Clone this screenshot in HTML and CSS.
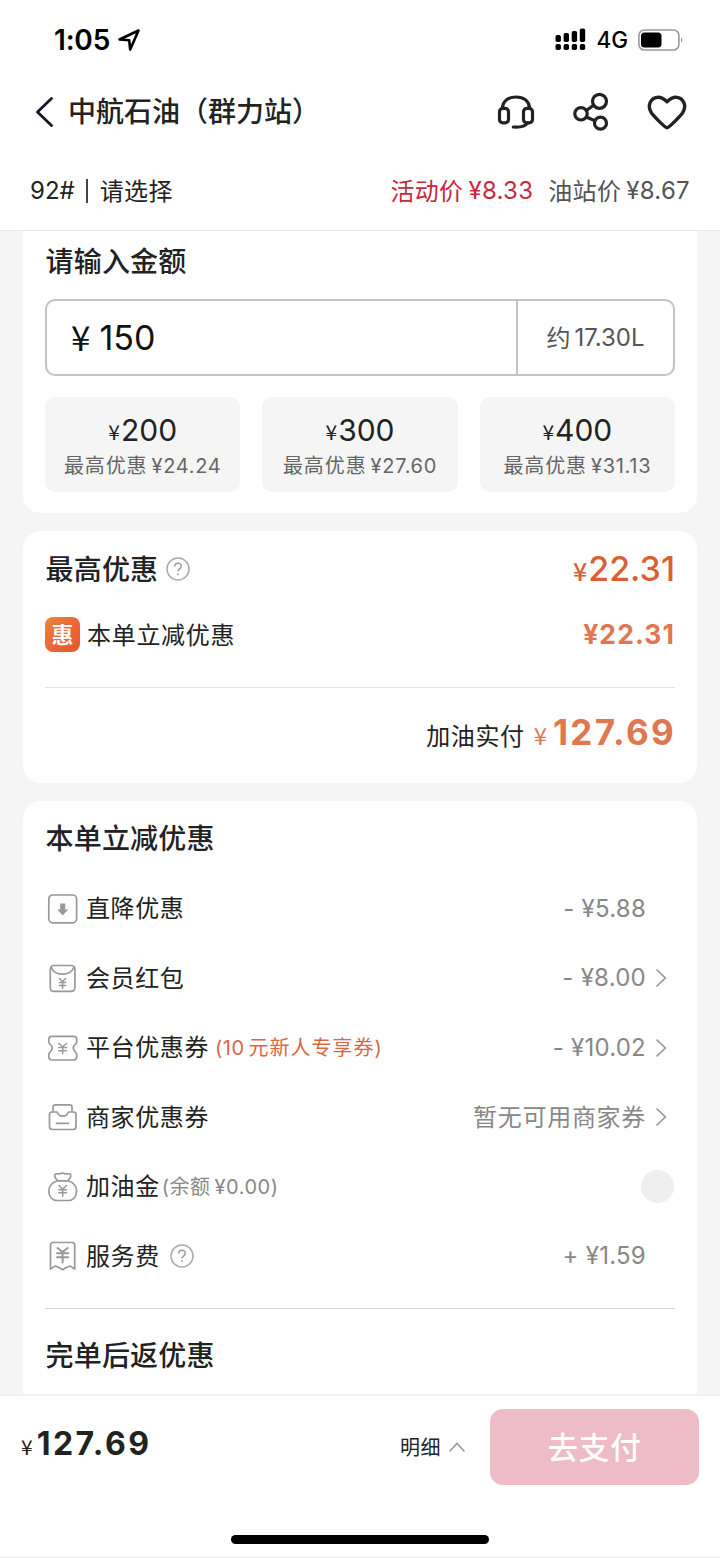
FILE: index.html
```html
<!DOCTYPE html>
<html lang="zh-CN">
<head>
<meta charset="utf-8">
<title>中航石油（群力站）</title>
<link rel="stylesheet" href="styles.css">
</head>
<body>
<div class="app">
  <header class="header">
    <div class="status">
      <div class="status-left">
        <span class="clock">1:05</span>
        <svg class="locate" width="24" height="24" viewBox="0 0 24 24" fill="none" stroke="#000" stroke-width="2.6" stroke-linejoin="round"><path d="M21.5 2.500 2.500 11.500 12.200 12.300 13.200 21.600Z"/></svg>
      </div>
      <div class="status-right">
        <svg width="31" height="23" viewBox="0 0 31 23" fill="#000"><rect x="0.500" y="7" width="5.400" height="7" rx="1.800"/><rect x="8.600" y="5" width="5.400" height="9" rx="1.800"/><rect x="16.700" y="3" width="5.400" height="11" rx="1.800"/><rect x="24.800" y="0.600" width="5.400" height="13.400" rx="1.800"/><rect x="0.500" y="16" width="5.400" height="6" rx="1.800"/><rect x="8.600" y="16" width="5.400" height="6" rx="1.800"/><rect x="16.700" y="16" width="5.400" height="6" rx="1.800"/><rect x="24.800" y="16" width="5.400" height="6" rx="1.800"/></svg>
        <span class="network">4G</span>
        <svg class="battery" width="46" height="22" viewBox="0 0 46 22"><rect x="0.900" y="1" width="40" height="20" rx="5.500" fill="#fff" stroke="#999" stroke-width="1.600"/><rect x="3" y="3.400" width="20.500" height="15.200" rx="3.500"/><path d="M43 8q2.600 3 0 6z" fill="#999"/></svg>
      </div>
    </div>
    <div class="nav">
      <svg class="back" width="20" height="32" viewBox="0 0 20 32" fill="none" stroke="#17172b" stroke-width="2.800" stroke-linecap="round" stroke-linejoin="round"><path d="M16.500 2.500 2.500 16 16.500 29.500"/></svg>
      <h1 class="nav-title">中航石油（群力站）</h1>
      <div class="actions">
        <svg width="40" height="40" viewBox="0 0 40 40" fill="none" stroke="#222" stroke-width="3.200" stroke-linecap="round"><path d="M6.300 16.500C7 8.800 12.500 5 20 5S33 8.800 33.700 16.500"/><rect x="3.500" y="16.300" width="9" height="14.500" rx="3.400"/><rect x="27.500" y="16.300" width="9" height="14.500" rx="3.400"/><path d="M31.500 31C29.500 34.200 25 35.500 17.300 35"/></svg>
        <svg width="40" height="40" viewBox="0 0 40 40" fill="none" stroke="#222" stroke-width="3.200"><circle cx="28.500" cy="9.300" r="7"/><circle cx="10" cy="21.800" r="6.200"/><circle cx="29.500" cy="31.200" r="6"/><path d="M15.300 18.500 22.600 13.300M15.300 25 24 28.700"/></svg>
        <svg width="42" height="40" viewBox="0 0 42 40" fill="none" stroke="#222" stroke-width="3.400" stroke-linejoin="round"><path d="M21 35.800C23 35.800 34 24.300 36.500 21 41.500 13.500 37 5.300 29.500 5.300 26 5.300 24.500 6.500 21 9.800 17.500 6.500 16 5.300 12.500 5.300 5 5.300.5 13.500 5.500 21 8 24.300 19 35.800 21 35.800Z"/></svg>
      </div>
    </div>
    <div class="station">
      <div class="fuel"><span>92#</span><i class="fuel-bar"></i><span class="choose">请选择</span></div>
      <div class="prices">
        <span class="price price-sale"><span class="lift">活动价</span><b>¥8.33</b></span>
        <span class="price"><span class="lift">油站价</span><b>¥8.67</b></span>
      </div>
    </div>
  </header>

  <main class="content">
    <section class="card card-amount">
      <h2 class="card-title">请输入金额</h2>
      <div class="amount-box">
        <div class="amount"><span class="yen">¥</span><span>150</span></div>
        <div class="litres"><span class="cjk">约</span>17.30L</div>
      </div>
      <div class="presets">
        <div class="preset"><div class="preset-value"><span class="yen">¥</span>200</div><div class="preset-note"><span>最高优惠</span><b>¥24.24</b></div></div>
        <div class="preset"><div class="preset-value"><span class="yen">¥</span>300</div><div class="preset-note"><span>最高优惠</span><b>¥27.60</b></div></div>
        <div class="preset"><div class="preset-value"><span class="yen">¥</span>400</div><div class="preset-note"><span>最高优惠</span><b>¥31.13</b></div></div>
      </div>
    </section>

    <section class="card card-best">
      <div class="best-head">
        <h2 class="card-title">最高优惠</h2>
        <svg class="help" width="24" height="24" viewBox="0 0 24 24" fill="none" stroke="#aaa" stroke-width="1.500"><circle cx="12" cy="12" r="11"/><path d="M8.700 9.500c0-4.300 6.600-4.300 6.600-.2 0 2.700-3.300 2.600-3.300 5.300M12 16.300v1.700" stroke="#999"/></svg>
        <div class="best-value"><span class="yen">¥</span>22.31</div>
      </div>
      <div class="instant">
        <span class="badge">惠</span>
        <span class="instant-label">本单立减优惠</span>
        <span class="instant-value">¥22.31</span>
      </div>
      <div class="total">
        <span class="total-label">加油实付</span><span class="yen">¥</span><span class="total-value">127.69</span>
      </div>
    </section>

    <section class="card card-detail">
      <h2 class="card-title">本单立减优惠</h2>
      <ul class="rows">
        <li class="row">
          <svg class="icon" viewBox="0 0 32 32"><rect x="1.800" y="2" width="27.800" height="27.800" rx="4"/><path class="solid" d="M13.200 10.500h5v6h3l-5.500 6-5.500-6h3z"/></svg>
          <span class="label">直降优惠</span><span class="value">- ¥5.88</span><i class="arrow-slot"></i>
        </li>
        <li class="row">
          <svg class="icon" viewBox="0 0 32 32"><rect x="3.300" y="3.500" width="24.600" height="25.800" rx="3.500"/><path d="M4 5C7.500 14.500 23.500 14.500 27 5"/><path class="yen-mark" d="M12.500 16.500 15.600 19.500 18.700 16.500M15.600 19.500v7M12.500 20.500h6.200M12.500 23.500h6.200"/></svg>
          <span class="label">会员红包</span><span class="value">- ¥8.00</span>
          <svg class="arrow-slot" width="12" height="20" viewBox="0 0 12 20"><path d="M1.500 1.500 10.300 10 1.500 18.500"/></svg>
        </li>
        <li class="row">
          <svg class="icon" viewBox="0 0 32 32"><path d="M5 4.300H26.500Q29.700 4.300 29.700 7.500V10.500C29.700 12 26.300 12.500 26.300 16S29.700 20.500 29.700 22V24.700Q29.700 28 26.500 28H5Q1.800 28 1.800 24.700V22C1.800 20.500 5.200 19.500 5.200 16S1.800 12 1.800 10.500V7.500Q1.800 4.300 5 4.300Z"/><path class="yen-mark" d="M11.800 11.500 15.700 14.800 19.600 11.500M15.700 14.800v7M11.800 15.500h7.800M11.800 18.800h7.800"/></svg>
          <span class="label">平台优惠券</span><span class="tag">(10<span class="tag-text">元新人专享券</span>)</span><span class="value">- ¥10.02</span>
          <svg class="arrow-slot" width="12" height="20" viewBox="0 0 12 20"><path d="M1.500 1.500 10.300 10 1.500 18.500"/></svg>
        </li>
        <li class="row">
          <svg class="icon" viewBox="0 0 32 32"><path d="M6 10V6Q6 3.800 8.500 3.800H22.500Q25 3.800 25 6V10"/><path d="M10 11H5Q2.500 11 2.500 13.500V25.500Q2.500 28.500 5.500 28.500H26Q29 28.500 29 25.500V13.500Q29 11 26.500 11H21.500C19.500 16.500 12 16.500 10 11ZM9.500 22.300h12"/></svg>
          <span class="label">商家优惠券</span><span class="value value-cjk">暂无可用商家券</span>
          <svg class="arrow-slot" width="12" height="20" viewBox="0 0 12 20"><path d="M1.500 1.500 10.300 10 1.500 18.500"/></svg>
        </li>
        <li class="row">
          <svg class="icon" viewBox="0 0 32 32"><path d="M10.500 9.800 7.800 6Q7 2.300 10.500 2.800 13 3.200 15.500 2 18 3.200 21 2.800 24.500 2.300 23.500 6L21 9.800M10.500 9.800H21C26 11.500 29.600 15 29.600 20 29.600 26 26 29.500 21.500 29.500H10C5.500 29.500 1.800 26 1.800 20 1.800 15 5.500 11.500 10.500 9.800Z"/><path class="yen-mark" d="M12 14.500 15.700 18.300 19.500 14.500M15.700 18.300v7M11.800 18.800h7.800M11.800 21.800h7.800"/></svg>
          <span class="label">加油金</span><span class="balance">(<span class="cjk">余额</span>¥0.00)</span><span class="knob"></span>
        </li>
        <li class="row">
          <svg class="icon" viewBox="0 0 32 32"><path d="M3.500 29V5Q3.500 2.500 6 2.500H25.200Q27.700 2.500 27.700 5V29L23 26 19.300 27.500 15.600 29.800 12 27.500 8.200 26Z"/><path class="yen-mark bold" d="M10.500 8 15.600 12 20.700 8M15.600 12v10.500M10 13.300h11.200M10 17.300h11.200"/></svg>
          <span class="label">服务费</span>
          <svg class="help" width="24" height="24" viewBox="0 0 24 24" fill="none" stroke="#aaa" stroke-width="1.500"><circle cx="12" cy="12" r="11"/><path d="M8.700 9.500c0-4.300 6.600-4.300 6.600-.2 0 2.700-3.300 2.600-3.300 5.300M12 16.300v1.700" stroke="#999"/></svg>
          <span class="value">+ ¥1.59</span><i class="arrow-slot"></i>
        </li>
      </ul>
      <h2 class="card-title after-title">完单后返优惠</h2>
    </section>
  </main>

  <footer class="footer">
    <div class="pay-bar">
      <div class="pay-total"><span class="yen">¥</span>127.69</div>
      <div class="detail"><span class="detail-text">明细</span><svg width="18" height="12" viewBox="0 0 18 12" fill="none" stroke="#999" stroke-width="1.600"><path d="M1.500 10.500 9 2.500 16.500 10.500"/></svg></div>
      <button class="pay">去支付</button>
    </div>
    <div class="home-bar"></div>
  </footer>
</div>
</body>
</html>
```

FILE: styles.css
```css
* { box-sizing: border-box; }

body {
  margin: 0;
  background: #fff;
  color: #222;
  font-family: "Noto Sans CJK SC", sans-serif;
}

h1, h2, ul { margin: 0; padding: 0; list-style: none; }
b { font-weight: 400; }
svg { display: block; flex: none; }

.app {
  width: 720px;
  height: 1558px;
  display: flex;
  flex-direction: column;
  overflow: hidden;
}

/* Header */
.header {
  flex: none;
  height: 231px;
  background: #fff;
  border-bottom: 1px solid #e8e8e8;
}

.status {
  height: 79px;
  padding: 0 36px 0 54px;
  display: flex;
  align-items: center;
  justify-content: space-between;
  font-family: Inter, sans-serif;
  color: #000;
}
.status-left, .status-right { display: flex; align-items: center; }
.clock { font-size: 28px; font-weight: 600; line-height: 32px; letter-spacing: -0.2px; }
.locate { margin-left: 7px; }
.network { margin: 1px 10px 0; font-size: 22.500px; font-weight: 500; line-height: 28px; }

.nav {
  height: 65px;
  padding: 0 32px 0 35px;
  display: flex;
  align-items: center;
}
.nav-title {
  margin-left: 13px;
  padding-bottom: 3px;
  font-size: 28px;
  font-weight: 500;
  line-height: 40px;
}
.actions { margin-left: auto; display: flex; gap: 35px; }

.station {
  height: 86px;
  padding: 8px 30px 0;
  display: flex;
  align-items: center;
  justify-content: space-between;
  font-size: 24px;
  line-height: 78px;
}
.fuel { display: flex; align-items: center; font-family: Inter, sans-serif; }
.fuel-bar { width: 2px; height: 24px; margin: 0 12px 0 11px; background: #444; }
.choose, .lift { padding-bottom: 2px; line-height: 76px; }
.choose { font-family: "Noto Sans CJK SC", sans-serif; letter-spacing: 0.400px; }
.prices { display: flex; gap: 15px; }
.price { color: #555; display: flex; letter-spacing: 0.300px; }
.price b { margin-left: 5px; font-family: Inter, sans-serif; }
.price-sale { color: #c8293f; }

/* Scrolling content */
.content {
  height: 1163px;
  padding: 0 23px;
  display: flex;
  flex-direction: column;
  gap: 18px;
  overflow: hidden;
  background: #f5f5f5;
}
.card { flex: none; padding: 0 22px; border-radius: 18px; background: #fff; }
.card-title { padding-left: 0.500px; font-size: 28px; font-weight: 500; line-height: 40px; letter-spacing: 0.200px; }

.card-amount {
  height: 282px;
  padding-top: 9px;
  border-radius: 0 0 18px 18px;
}
.amount-box {
  height: 77px;
  margin-top: 19px;
  display: flex;
  border: 2px solid #c2c2c2;
  border-radius: 10px;
}
.amount {
  flex: 1;
  padding: 0 0 1px 24px;
  display: flex;
  align-items: center;
  gap: 9px;
  font-family: Inter, sans-serif;
  font-size: 34px;
  color: #111;
}
.amount .yen { margin-top: -3px; font-size: 35px; line-height: 40px; }
.yen { font-family: "Noto Sans CJK SC", sans-serif; font-weight: 400; }
.litres {
  width: 157px;
  display: flex;
  align-items: center;
  justify-content: center;
  gap: 4px;
  border-left: 2px solid #c2c2c2;
  font-family: Inter, sans-serif;
  font-size: 24px;
  color: #555;
}
.litres .cjk { padding-bottom: 2px; }
.cjk { font-family: "Noto Sans CJK SC", sans-serif; }

.presets { margin-top: 21px; display: grid; grid-template-columns: repeat(3, 1fr); gap: 22px; }
.preset {
  height: 95px;
  padding-top: 15px;
  border-radius: 10px;
  background: #f5f5f5;
  text-align: center;
}
.preset-value { font-family: Inter, sans-serif; font-size: 30px; line-height: 36px; }
.preset-value .yen { margin-right: 1px; font-size: 21px; line-height: 20px; vertical-align: 1px; }
.preset-note {
  display: flex;
  justify-content: center;
  font-size: 20px;
  line-height: 36px;
  letter-spacing: 0.900px;
  color: #666;
}
.preset-note span { line-height: 34px; }
.preset-note b { margin-left: 4px; font-family: Inter, sans-serif; letter-spacing: 0.700px; }

/* Best discount */
.card-best { height: 252px; }
.best-head { height: 76px; display: flex; align-items: center; }
.best-head .card-title { padding-bottom: 3px; }
.help { margin-left: 8px; }
.best-value {
  margin-left: auto;
  font-family: Inter, sans-serif;
  font-size: 34px;
  font-weight: 500;
  line-height: 40px;
  color: #db5f34;
}
.best-value .yen { margin-right: 1px; font-size: 25px; font-weight: 500; line-height: 24px; }
.instant { height: 81px; padding-bottom: 26px; display: flex; align-items: center; border-bottom: 1px solid #e2e2e2; }
.badge {
  width: 35px;
  height: 35px;
  border-radius: 8px;
  background: linear-gradient(135deg, #e8863f, #ee6437 55%, #e0592d);
  color: #fff;
  font-size: 22px;
  font-weight: 700;
  line-height: 33px;
  text-align: center;
}
.instant-label { margin-left: 7px; padding-bottom: 1px; font-size: 24px; line-height: 36px; letter-spacing: 0.700px; }
.instant-value {
  margin-left: auto;
  font-family: Inter, sans-serif;
  font-size: 26.500px;
  font-weight: 700;
  letter-spacing: 1.100px;
  color: #df7750;
}
.total { height: 92px; margin-right: -1px; display: flex; align-items: baseline; justify-content: flex-end; line-height: 88px; }
.total-label { font-size: 24px; letter-spacing: 0.600px; }
.total .yen { margin: 0 6px 0 9px; font-size: 24px; color: #df7750; }
.total-value { font-family: Inter, sans-serif; font-size: 35px; font-weight: 700; letter-spacing: 2.300px; color: #df7750; }

/* Discount breakdown */
.card-detail { height: 620px; border-radius: 18px 18px 0 0; }
.card-detail > .card-title { height: 73px; line-height: 72px; }
.rows { padding-bottom: 17px; border-bottom: 1px solid #d4d4d4; }
.row { height: 69.500px; display: flex; align-items: center; }
.icon { width: 32px; height: 32px; margin: 0 7px 0 2px; fill: none; stroke: #999; stroke-width: 1.700; stroke-linejoin: round; stroke-linecap: round; }
.icon .solid { fill: #999; stroke: none; }
.icon .yen-mark { stroke-width: 1.500; }
.icon .bold { stroke-width: 2; }
.label { padding-bottom: 3px; font-size: 24px; line-height: 36px; letter-spacing: 0.600px; }
.value {
  margin-left: auto;
  font-family: Inter, sans-serif;
  font-size: 24px;
  line-height: 36px;
  letter-spacing: 0.250px;
  color: #888;
}
.value-cjk { padding-bottom: 3px; font-family: "Noto Sans CJK SC", sans-serif; letter-spacing: 0.700px; }
.arrow-slot { width: 12px; margin: 0 8px 0 9px; fill: none; stroke: #999; stroke-width: 1.700; }
.row .help { margin-left: 10px; }
.tag { margin-left: 6px; font-family: Inter, sans-serif; font-size: 20px; letter-spacing: 0.500px; color: #d9673f; }
.tag-text { margin-left: 4px; font-family: "Noto Sans CJK SC", sans-serif; letter-spacing: 1px; }
.tag, .balance { padding-bottom: 2px; }
.balance { margin-left: 2px; font-family: Inter, sans-serif; font-size: 20px; letter-spacing: 0.500px; color: #888; }
.balance .cjk { margin-right: 4px; }
.knob { width: 33px; height: 33px; margin: 0 1px 0 auto; border-radius: 50%; background: #eee; }
.card-detail > .after-title { line-height: 90px; }

/* Payment footer */
.footer {
  flex: none;
  height: 164px;
  border-top: 2px solid #f2f2f2;
  border-bottom: 1px solid #eee;
  background: #fff;
}
.pay-bar { height: 102px; padding: 0 21px; display: flex; align-items: center; }
.pay-total { font-family: Inter, sans-serif; font-size: 32px; font-weight: 700; line-height: 40px; letter-spacing: 2.500px; margin-bottom: 6px; }
.pay-total .yen { margin-right: 4px; font-size: 21px; line-height: 20px; letter-spacing: 0; }
.detail { margin-left: auto; display: flex; align-items: center; gap: 7px; font-size: 20px; letter-spacing: 0.500px; }
.detail-text { padding-bottom: 2px; }
.pay {
  width: 209px;
  height: 76px;
  margin-left: 24px;
  padding: 0 0 3px;
  border: 0;
  border-radius: 13px;
  background: #eebcc6;
  color: #fff;
  font-family: inherit;
  font-size: 30.500px;
  font-weight: 500;
  letter-spacing: 0.800px;
}
.home-bar { width: 258px; height: 9px; margin: 37px 0 0 231px; border-radius: 5px; background: #000; }
```
